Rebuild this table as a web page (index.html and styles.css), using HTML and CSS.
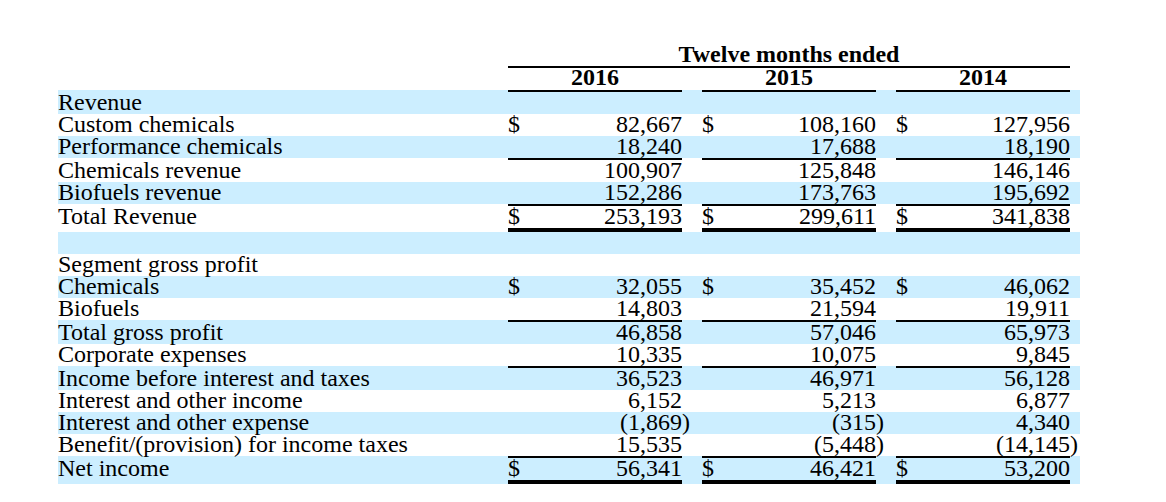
FILE: index.html
```html
<!DOCTYPE html>
<html lang="en">
<head>
<meta charset="utf-8">
<title>Twelve months ended</title>
<link rel="stylesheet" href="styles.css">
</head>
<body>
<table class="fin">
  <colgroup>
    <col class="c-label"><col class="c-cur"><col class="c-num"><col class="c-gap">
    <col class="c-cur"><col class="c-num"><col class="c-gap">
    <col class="c-cur"><col class="c-num"><col class="c-trail">
  </colgroup>
  <tr class="h1">
    <td></td><th colspan="8">Twelve months ended</th><td></td>
  </tr>
  <tr class="h2">
    <td class="nb"></td><th colspan="2">2016</th><th class="g"></th><th colspan="2">2015</th><th class="g"></th><th colspan="2">2014</th><td class="nb"></td>
  </tr>
  <tr class="b t">
    <td>Revenue</td><td class="v"></td><td class="v n"></td><td></td><td class="v"></td><td class="v n"></td><td></td><td class="v"></td><td class="v n"></td><td></td>
  </tr>
  <tr>
    <td>Custom chemicals</td><td class="v">$</td><td class="v n">82,667</td><td></td><td class="v">$</td><td class="v n">108,160</td><td></td><td class="v">$</td><td class="v n">127,956</td><td></td>
  </tr>
  <tr class="b">
    <td>Performance chemicals</td><td class="v"></td><td class="v n">18,240</td><td></td><td class="v"></td><td class="v n">17,688</td><td></td><td class="v"></td><td class="v n">18,190</td><td></td>
  </tr>
  <tr class="t">
    <td>Chemicals revenue</td><td class="v"></td><td class="v n">100,907</td><td></td><td class="v"></td><td class="v n">125,848</td><td></td><td class="v"></td><td class="v n">146,146</td><td></td>
  </tr>
  <tr class="b">
    <td>Biofuels revenue</td><td class="v"></td><td class="v n">152,286</td><td></td><td class="v"></td><td class="v n">173,763</td><td></td><td class="v"></td><td class="v n">195,692</td><td></td>
  </tr>
  <tr class="t d">
    <td>Total Revenue</td><td class="v">$</td><td class="v n">253,193</td><td></td><td class="v">$</td><td class="v n">299,611</td><td></td><td class="v">$</td><td class="v n">341,838</td><td></td>
  </tr>
  <tr class="b">
    <td>&nbsp;</td><td class="v"></td><td class="v n"></td><td></td><td class="v"></td><td class="v n"></td><td></td><td class="v"></td><td class="v n"></td><td></td>
  </tr>
  <tr>
    <td>Segment gross profit</td><td class="v"></td><td class="v n"></td><td></td><td class="v"></td><td class="v n"></td><td></td><td class="v"></td><td class="v n"></td><td></td>
  </tr>
  <tr class="b">
    <td>Chemicals</td><td class="v">$</td><td class="v n">32,055</td><td></td><td class="v">$</td><td class="v n">35,452</td><td></td><td class="v">$</td><td class="v n">46,062</td><td></td>
  </tr>
  <tr>
    <td>Biofuels</td><td class="v"></td><td class="v n">14,803</td><td></td><td class="v"></td><td class="v n">21,594</td><td></td><td class="v"></td><td class="v n">19,911</td><td></td>
  </tr>
  <tr class="b t">
    <td>Total gross profit</td><td class="v"></td><td class="v n">46,858</td><td></td><td class="v"></td><td class="v n">57,046</td><td></td><td class="v"></td><td class="v n">65,973</td><td></td>
  </tr>
  <tr>
    <td>Corporate expenses</td><td class="v"></td><td class="v n">10,335</td><td></td><td class="v"></td><td class="v n">10,075</td><td></td><td class="v"></td><td class="v n">9,845</td><td></td>
  </tr>
  <tr class="b t">
    <td>Income before interest and taxes</td><td class="v"></td><td class="v n">36,523</td><td></td><td class="v"></td><td class="v n">46,971</td><td></td><td class="v"></td><td class="v n">56,128</td><td></td>
  </tr>
  <tr>
    <td>Interest and other income</td><td class="v"></td><td class="v n">6,152</td><td></td><td class="v"></td><td class="v n">5,213</td><td></td><td class="v"></td><td class="v n">6,877</td><td></td>
  </tr>
  <tr class="b">
    <td>Interest and other expense</td><td class="v"></td><td class="v n">(1,869<span class="p">)</span></td><td></td><td class="v"></td><td class="v n">(315<span class="p">)</span></td><td></td><td class="v"></td><td class="v n">4,340</td><td></td>
  </tr>
  <tr>
    <td>Benefit/(provision) for income taxes</td><td class="v"></td><td class="v n">15,535</td><td></td><td class="v"></td><td class="v n">(5,448<span class="p">)</span></td><td></td><td class="v"></td><td class="v n">(14,145<span class="p">)</span></td><td></td>
  </tr>
  <tr class="b t d">
    <td>Net income</td><td class="v">$</td><td class="v n">56,341</td><td></td><td class="v">$</td><td class="v n">46,421</td><td></td><td class="v">$</td><td class="v n">53,200</td><td></td>
  </tr>
</table>
</body>
</html>
```

FILE: styles.css
```css
html, body {
  margin: 0;
  padding: 0;
  background: #ffffff;
}

.fin {
  margin: 44px 0 0 58px;
  border-collapse: separate;
  border-spacing: 0;
  table-layout: fixed;
  width: 1022px;
  font-family: "Liberation Serif", "Times New Roman", serif;
  font-size: 24px;
  color: #000;
}

.c-label { width: 450px; }
.c-cur { width: 24px; }
.c-num { width: 150px; }
.c-gap { width: 20px; }
.c-trail { width: 10px; }

.fin td,
.fin th {
  padding: 0 0 2px 0;
  line-height: 20px;
  white-space: nowrap;
  text-align: left;
  vertical-align: top;
  font-weight: normal;
}

.fin th {
  font-weight: bold;
  text-align: center;
}

.fin tr.h2 th {
  border-top: 2px solid #000;
  line-height: 18px;
  padding-bottom: 4px;
}

.fin tr.h2 td.nb {
  border-top: 2px solid transparent;
}

.fin tr.b {
  background: #cceeff;
}

.fin tr.t td {
  border-top: 2px solid transparent;
}

.fin tr.t td.v {
  border-top-color: #000;
}

.fin tr.d td {
  border-bottom: 4px solid transparent;
}

.fin tr.d td.v {
  border-bottom-color: #000;
}

.fin td.n {
  text-align: right;
}

.fin .p {
  margin-right: -8px;
}
```
